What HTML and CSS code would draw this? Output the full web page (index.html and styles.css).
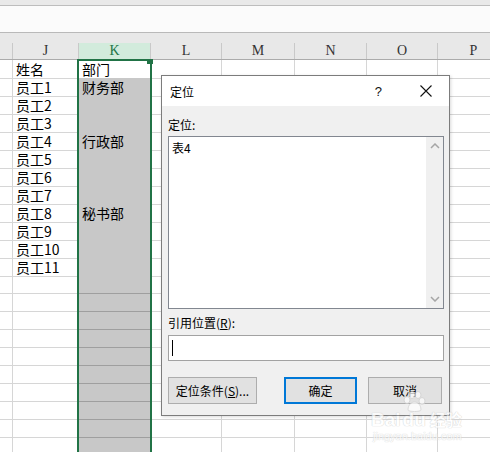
FILE: index.html
```html
<!DOCTYPE html>
<html lang="zh-CN">
<head>
<meta charset="utf-8">
<title>定位</title>
<link rel="stylesheet" href="styles.css">
</head>
<body>
<div class="app">
  <div class="ribbon-edge"></div>
  <div class="formula-strip"></div>
  <div class="band"></div>
  <div class="row colhead">
    <span class="hc"></span><span class="hc">J</span><span class="hc active">K</span><span class="hc">L</span><span class="hc">M</span><span class="hc">N</span><span class="hc">O</span><span class="hc">P</span>
  </div>
  <div class="grid">
    <div class="row"><span class="c"></span><span class="c">姓名</span><span class="c">部门</span><span class="c"></span><span class="c"></span><span class="c"></span><span class="c"></span><span class="c"></span></div>
    <div class="row"><span class="c"></span><span class="c">员工1</span><span class="c sel">财务部</span><span class="c"></span><span class="c"></span><span class="c"></span><span class="c"></span><span class="c"></span></div>
    <div class="row"><span class="c"></span><span class="c">员工2</span><span class="c sel"></span><span class="c"></span><span class="c"></span><span class="c"></span><span class="c"></span><span class="c"></span></div>
    <div class="row"><span class="c"></span><span class="c">员工3</span><span class="c sel"></span><span class="c"></span><span class="c"></span><span class="c"></span><span class="c"></span><span class="c"></span></div>
    <div class="row"><span class="c"></span><span class="c">员工4</span><span class="c sel">行政部</span><span class="c"></span><span class="c"></span><span class="c"></span><span class="c"></span><span class="c"></span></div>
    <div class="row"><span class="c"></span><span class="c">员工5</span><span class="c sel"></span><span class="c"></span><span class="c"></span><span class="c"></span><span class="c"></span><span class="c"></span></div>
    <div class="row"><span class="c"></span><span class="c">员工6</span><span class="c sel"></span><span class="c"></span><span class="c"></span><span class="c"></span><span class="c"></span><span class="c"></span></div>
    <div class="row"><span class="c"></span><span class="c">员工7</span><span class="c sel"></span><span class="c"></span><span class="c"></span><span class="c"></span><span class="c"></span><span class="c"></span></div>
    <div class="row"><span class="c"></span><span class="c">员工8</span><span class="c sel">秘书部</span><span class="c"></span><span class="c"></span><span class="c"></span><span class="c"></span><span class="c"></span></div>
    <div class="row"><span class="c"></span><span class="c">员工9</span><span class="c sel"></span><span class="c"></span><span class="c"></span><span class="c"></span><span class="c"></span><span class="c"></span></div>
    <div class="row"><span class="c"></span><span class="c">员工10</span><span class="c sel"></span><span class="c"></span><span class="c"></span><span class="c"></span><span class="c"></span><span class="c"></span></div>
    <div class="row"><span class="c"></span><span class="c">员工11</span><span class="c sel"></span><span class="c"></span><span class="c"></span><span class="c"></span><span class="c"></span><span class="c"></span></div>
    <div class="row"><span class="c"></span><span class="c"></span><span class="c sel"></span><span class="c"></span><span class="c"></span><span class="c"></span><span class="c"></span><span class="c"></span></div>
    <div class="row"><span class="c"></span><span class="c"></span><span class="c sel"></span><span class="c"></span><span class="c"></span><span class="c"></span><span class="c"></span><span class="c"></span></div>
    <div class="row"><span class="c"></span><span class="c"></span><span class="c sel"></span><span class="c"></span><span class="c"></span><span class="c"></span><span class="c"></span><span class="c"></span></div>
    <div class="row"><span class="c"></span><span class="c"></span><span class="c sel"></span><span class="c"></span><span class="c"></span><span class="c"></span><span class="c"></span><span class="c"></span></div>
    <div class="row"><span class="c"></span><span class="c"></span><span class="c sel"></span><span class="c"></span><span class="c"></span><span class="c"></span><span class="c"></span><span class="c"></span></div>
    <div class="row"><span class="c"></span><span class="c"></span><span class="c sel"></span><span class="c"></span><span class="c"></span><span class="c"></span><span class="c"></span><span class="c"></span></div>
    <div class="row"><span class="c"></span><span class="c"></span><span class="c sel"></span><span class="c"></span><span class="c"></span><span class="c"></span><span class="c"></span><span class="c"></span></div>
    <div class="row"><span class="c"></span><span class="c"></span><span class="c sel"></span><span class="c"></span><span class="c"></span><span class="c"></span><span class="c"></span><span class="c"></span></div>
    <div class="row"><span class="c"></span><span class="c"></span><span class="c sel"></span><span class="c"></span><span class="c"></span><span class="c"></span><span class="c"></span><span class="c"></span></div>
    <div class="row"><span class="c"></span><span class="c"></span><span class="c sel"></span><span class="c"></span><span class="c"></span><span class="c"></span><span class="c"></span><span class="c"></span></div>
  </div>

  <div class="selection"><span class="handle"></span></div>

  <div class="dialog">
    <div class="titlebar">
      <span class="title">定位</span>
      <span class="help">?</span>
      <svg class="close" width="12" height="12" viewBox="0 0 12 12"><path d="M0.5 0.5 L11.5 11.5 M11.5 0.5 L0.5 11.5" stroke="#111" stroke-width="1.1" fill="none"/></svg>
    </div>
    <div class="body">
      <div class="label">定位:</div>
      <div class="listbox">
        <div class="items"><div class="item">表4</div></div>
        <div class="scrollbar">
          <svg width="10" height="6" viewBox="0 0 10 6"><path d="M1 5 L5 1 L9 5" stroke="#a6a6a6" stroke-width="1.5" fill="none"/></svg>
          <svg width="10" height="6" viewBox="0 0 10 6"><path d="M1 1 L5 5 L9 1" stroke="#a6a6a6" stroke-width="1.5" fill="none"/></svg>
        </div>
      </div>
      <div class="label label2">引用位置(<u>R</u>):</div>
      <div class="input"><span class="caret"></span></div>
      <div class="buttons">
        <span class="btn btn-wide">定位条件(<u>S</u>)...</span>
        <span class="btn btn-default">确定</span>
        <span class="btn">取消</span>
      </div>
    </div>
  </div>

  <div class="watermark">
    <svg class="paw" width="24" height="22" viewBox="0 0 24 22">
      <g fill="#ffffff" stroke="#d2d2d2" stroke-width="1">
        <ellipse cx="5" cy="9" rx="3" ry="3.5"/>
        <ellipse cx="10" cy="4" rx="3" ry="3.5"/>
        <ellipse cx="16" cy="4" rx="3" ry="3.5"/>
        <ellipse cx="20" cy="10" rx="3" ry="3.5"/>
        <path d="M6 19 C6 13 10 11 12.5 11 C15 11 19 13 19 19 C19 21 6 21 6 19 Z"/>
      </g>
    </svg>
    <div class="wm-line1">Bai<span class="du">du</span><span class="jy">经验</span></div>
    <div class="wm-line2">jingyan.baidu.com</div>
  </div>
</div>
</body>
</html>
```
FILE: styles.css
```css
html, body {
  margin: 0;
  padding: 0;
  background: #ffffff;
}

.app {
  position: relative;
  width: 490px;
  height: 452px;
  overflow: hidden;
  font-family: "Noto Sans CJK SC", "Noto Sans", sans-serif;
}

.ribbon-edge {
  height: 5px;
  background: #e9e9e9;
  border-bottom: 1px solid #bdbdbd;
}

.formula-strip {
  height: 26px;
  background: #fbfbfb;
  border-bottom: 1px solid #b9b9b9;
}

.band {
  height: 10px;
  background: #e8e8e8;
}

.row {
  display: grid;
  grid-template-columns: 13px 66px 72px 71px 73px 72px 71px 72px;
  height: 18px;
}

.colhead {
  height: 17px;
  background: #e8e8e8;
  border-bottom: 1px solid #ababab;
  box-sizing: border-box;
}

.hc {
  box-sizing: border-box;
  border-right: 1px solid #c9c9c9;
  font-family: "Liberation Serif", "DejaVu Serif", serif;
  font-size: 14px;
  line-height: 16px;
  text-align: center;
  color: #333;
}

.hc.active {
  background: #d2ebdc;
  color: #217346;
}

.c {
  box-sizing: border-box;
  border-right: 1px solid #d6d6d6;
  border-bottom: 1px solid #d6d6d6;
  font-size: 14px;
  line-height: 18px;
  padding-left: 3px;
  color: #000;
  white-space: nowrap;
}

.c.sel {
  background: #c8c8c8;
  border-bottom-color: #9f9f9f;
}

.selection {
  position: absolute;
  left: 77px;
  top: 59px;
  width: 75px;
  height: 420px;
  box-sizing: border-box;
  border: 2px solid #217346;
}

.handle {
  position: absolute;
  right: -3px;
  top: -2px;
  width: 6px;
  height: 5px;
  background: #217346;
}

/* Dialog */
.dialog {
  position: absolute;
  left: 161px;
  top: 75px;
  width: 289px;
  height: 341px;
  box-sizing: border-box;
  border: 1px solid #7c7c7c;
  background: #f0f0f0;
  display: flex;
  flex-direction: column;
  box-shadow: 1px 1px 3px rgba(0, 0, 0, 0.15);
}

.titlebar {
  height: 30px;
  background: #ffffff;
  display: flex;
  align-items: center;
  padding-left: 8px;
  flex-shrink: 0;
}

.title {
  font-size: 12px;
  color: #000;
  flex: 1;
}

.help {
  font-size: 13px;
  color: #111;
  margin-right: 38px;
  font-family: "Liberation Sans", sans-serif;
}

.close {
  margin-right: 17px;
}

.body {
  padding: 11px 5px 0 6px;
  display: flex;
  flex-direction: column;
}

.label {
  font-size: 12px;
  line-height: 16px;
  color: #000;
}

.label2 {
  margin-top: 6px;
}

.label u {
  text-underline-offset: 1px;
}

.listbox {
  margin-top: 3px;
  height: 173px;
  box-sizing: border-box;
  border: 1px solid #828790;
  background: #ffffff;
  display: flex;
}

.items {
  flex: 1;
  padding: 3px 3px;
}

.item {
  font-size: 12px;
  line-height: 16px;
}

.scrollbar {
  width: 17px;
  background: #f0f0f0;
  display: flex;
  flex-direction: column;
  justify-content: space-between;
  align-items: center;
  padding: 6px 0 6px;
}

.input {
  margin-top: 4px;
  height: 26px;
  box-sizing: border-box;
  border: 1px solid #a2a2a2;
  background: #ffffff;
  display: flex;
  align-items: center;
  padding-left: 3px;
}

.caret {
  width: 1px;
  height: 16px;
  background: #000;
}

.buttons {
  margin-top: 16px;
  display: flex;
  align-items: center;
}

.btn {
  height: 27px;
  width: 74px;
  box-sizing: border-box;
  border: 1px solid #adadad;
  background: #e1e1e1;
  display: flex;
  align-items: center;
  justify-content: center;
  font-size: 12px;
  color: #000;
  margin-left: 11px;
}

.btn-wide {
  width: 89px;
  margin-left: 0;
  margin-right: 16px;
}

.btn-default {
  width: 73px;
  border: 2px solid #0078d7;
}

/* Watermark */
.watermark {
  position: absolute;
  left: 371px;
  top: 391px;
  width: 110px;
  opacity: 0.7;
  pointer-events: none;
}

.paw {
  position: absolute;
  left: 31px;
  top: 0;
}

.wm-line1 {
  margin-top: 18px;
  font-family: "Liberation Sans", sans-serif;
  font-weight: bold;
  font-size: 19px;
  line-height: 20px;
  color: #ffffff;
  text-shadow: 0 0 1px #c4c4c4, 0 0 1px #c4c4c4;
}

.du {
  margin-left: 2px;
}

.jy {
  font-family: "Noto Sans CJK SC", sans-serif;
  font-size: 16px;
  margin-left: 4px;
}

.wm-line2 {
  font-family: "Liberation Sans", sans-serif;
  font-size: 11px;
  line-height: 13px;
  color: #ffffff;
  text-shadow: 0 0 1px #c8c8c8, 0 0 1px #c8c8c8;
  margin-left: 2px;
}
```
